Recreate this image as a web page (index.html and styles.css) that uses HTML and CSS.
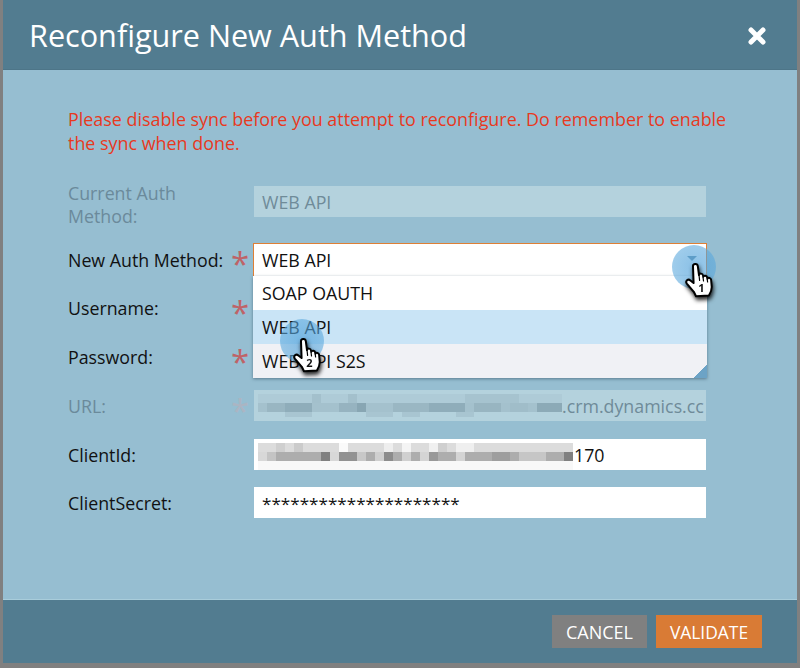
FILE: index.html
```html
<!DOCTYPE html>
<html lang="en">
<head>
<meta charset="utf-8">
<title>Reconfigure New Auth Method</title>
<link rel="stylesheet" href="styles.css">
</head>
<body>
<svg class="defs" width="0" height="0" aria-hidden="true">
  <symbol id="hand" viewBox="0 0 28 35">
    <path d="M8 3.5c-.2-3 4.4-3.4 4.8-.4L14 12c.5-2 3.6-1.8 4 .4l.3 1.4c.6-1.8 3.5-1.4 3.9.7l.2 1.2c.8-1.4 3.4-1 3.7 1l.6 6.6c.3 4-1 6.4-2.8 9.2L11 33.2l-2.2-4.4-7-8.2c-1.8-2.4 1.2-5.2 3.6-3.2L8.6 20z" fill="#fff" stroke="#000" stroke-width="2" stroke-linejoin="round"/>
    <path d="M14 12l.6 5.4M18 14l.5 4M22.2 16l.4 3" fill="none" stroke="#000" stroke-width="1.2" stroke-linecap="round"/>
  </symbol>
</svg>
<div class="dialog">
  <header class="head">
    <h1 class="title">Reconfigure New Auth Method</h1>
    <svg class="close" width="20" height="20" viewBox="0 0 20 20" aria-label="Close"><path d="M4 4l12 12M16 4L4 16" stroke="#fff" stroke-width="5" stroke-linecap="round"/></svg>
  </header>
  <main class="body">
    <p class="warn">Please disable sync before you attempt to reconfigure. Do remember to enable the sync when done.</p>
    <div class="form">
      <div class="label label-first muted">Current Auth Method:</div>
      <div class="star"></div>
      <div class="field off">WEB API</div>

      <div class="label label-select">New Auth Method:</div>
      <div class="star">*</div>
      <div class="select">WEB API<span class="arrow"></span></div>

      <div class="label">Username:</div>
      <div class="star">*</div>
      <div class="field"></div>

      <div class="label">Password:</div>
      <div class="star">*</div>
      <div class="field"></div>

      <div class="label muted">URL:</div>
      <div class="star star-off">*</div>
      <div class="field off mosaic-field">
        <svg class="mosaic" width="304" height="24" viewBox="0 0 304 24" aria-hidden="true">
          <g>
            <rect x="0" y="0" width="304" height="9" fill="#aecbd7"/>
            <rect x="0" y="9" width="304" height="9" fill="#a4c1cd"/>
            <rect x="27" y="9" width="27" height="9" fill="#8fadba"/>
            <rect x="9" y="9" width="18" height="9" fill="#99b6c2"/>
            <rect x="81" y="9" width="27" height="9" fill="#96b3c0"/>
            <rect x="99" y="9" width="9" height="9" fill="#88a6b3"/>
            <rect x="135" y="9" width="36" height="9" fill="#9ab7c3"/>
            <rect x="171" y="9" width="36" height="9" fill="#8fadba"/>
            <rect x="216" y="9" width="27" height="9" fill="#98b5c1"/>
            <rect x="252" y="9" width="18" height="9" fill="#a0bdc9"/>
            <rect x="279" y="9" width="25" height="9" fill="#8caab7"/>
            <rect x="54" y="0" width="9" height="9" fill="#a3c0cc"/>
            <rect x="90" y="0" width="9" height="9" fill="#a3c0cc"/>
            <rect x="207" y="0" width="54" height="9" fill="#a6c3cf"/>
            <rect x="27" y="18" width="27" height="5" fill="#a8c5d1"/>
            <rect x="108" y="18" width="27" height="5" fill="#a8c5d1"/>
            <rect x="144" y="18" width="18" height="5" fill="#a8c5d1"/>
            <rect x="198" y="18" width="18" height="5" fill="#a8c5d1"/>
          </g>
        </svg><span>.crm.dynamics.cc</span>
      </div>

      <div class="label">ClientId:</div>
      <div class="star"></div>
      <div class="field mosaic-field">
        <svg class="mosaic" width="315" height="27" viewBox="0 0 315 27" aria-hidden="true">
          <rect x="0" y="18" width="315" height="9" fill="#f8f8f8"/>
          <rect x="0" y="0" width="315" height="9" fill="#dcdcdc"/>
          <rect x="18" y="0" width="9" height="9" fill="#cfcfcf"/>
          <rect x="36" y="0" width="9" height="9" fill="#cbcbcb"/>
          <rect x="81" y="0" width="9" height="9" fill="#fafafa"/>
          <rect x="126" y="0" width="9" height="9" fill="#eeeeee"/>
          <rect x="144" y="0" width="9" height="9" fill="#f4f4f4"/>
          <rect x="171" y="0" width="9" height="9" fill="#f0f0f0"/>
          <rect x="180" y="0" width="9" height="9" fill="#cfcfcf"/>
          <rect x="198" y="0" width="18" height="9" fill="#efefef"/>
          <rect x="0" y="9" width="315" height="9" fill="#adadad"/>
          <rect x="0" y="9" width="9" height="9" fill="#d8d8d8"/>
          <rect x="9" y="9" width="9" height="9" fill="#c4c4c4"/>
          <rect x="63" y="9" width="9" height="9" fill="#808080"/>
          <rect x="72" y="9" width="9" height="9" fill="#d8d8d8"/>
          <rect x="81" y="9" width="18" height="9" fill="#929292"/>
          <rect x="99" y="9" width="9" height="9" fill="#c8c8c8"/>
          <rect x="117" y="9" width="9" height="9" fill="#cfcfcf"/>
          <rect x="126" y="9" width="9" height="9" fill="#8c8c8c"/>
          <rect x="144" y="9" width="9" height="9" fill="#d0d0d0"/>
          <rect x="162" y="9" width="9" height="9" fill="#d4d4d4"/>
          <rect x="171" y="9" width="9" height="9" fill="#989898"/>
          <rect x="198" y="9" width="9" height="9" fill="#d4d4d4"/>
          <rect x="234" y="9" width="18" height="9" fill="#9e9e9e"/>
          <rect x="261" y="9" width="27" height="9" fill="#c6c6c6"/>
          <rect x="306" y="9" width="9" height="9" fill="#808080"/>
        </svg><span class="tight">170</span>
      </div>

      <div class="label">ClientSecret:</div>
      <div class="star"></div>
      <div class="field field-secret">*********************</div>
    </div>
    <ul class="menu">
      <li class="opt">SOAP OAUTH</li>
      <li class="opt opt-hover">WEB API</li>
      <li class="opt opt-last">WEB API S2S</li>
    </ul>
    <span class="grip"></span>
    <span class="spot spot-one"></span>
    <span class="spot spot-two"></span>
    <svg class="hand hand-one" width="28" height="35" viewBox="0 0 28 35" aria-hidden="true"><use href="#hand"/><text class="hand-num" x="16.5" y="28.5">1</text></svg>
    <svg class="hand hand-two" width="28" height="35" viewBox="0 0 28 35" aria-hidden="true"><use href="#hand"/><text class="hand-num" x="16.5" y="28.5">2</text></svg>
  </main>
  <footer class="foot">
    <button class="btn btn-cancel">CANCEL</button>
    <button class="btn btn-validate">VALIDATE</button>
  </footer>
</div>
</body>
</html>
```

FILE: styles.css
```css
* { box-sizing: border-box; }
html, body { margin: 0; padding: 0; height: 100%; overflow: hidden; }
body {
  background: #808080;
  font-family: "Open Sans", "Noto Sans", sans-serif;
  font-size: 17.8px;
  color: #111;
}
.defs { position: absolute; }
.dialog {
  margin: 0 3px;
  height: 663px;
  display: flex;
  flex-direction: column;
  background: #96bed1;
}
.head {
  height: 70px;
  flex: none;
  background: #527c90;
  border-bottom: 1px solid #4d7588;
  display: flex;
  align-items: center;
  justify-content: space-between;
  padding: 0 30px 0 26px;
}
.title {
  margin: 0;
  font-size: 30.6px;
  font-weight: 400;
  color: #fff;
  line-height: 42px;
}
.close { flex: none; margin-top: 2px; }
.body {
  position: relative;
  flex: 1;
  padding: 37px 60px 0 65px;
  border-bottom: 1px solid #a9cddb;
}
.warn {
  margin: 0 0 31px;
  color: #e8391e;
  font-size: 17.9px;
  line-height: 24px;
}
.form {
  display: grid;
  grid-template-columns: 163px 22px 454px;
  grid-template-rows: 57px 49px 49px 49px 49px 48px 31px;
  align-items: start;
}
.label { line-height: 24px; padding-top: 4px; white-space: nowrap; }
.label-select { padding-top: 5px; }
.label-first { margin-top: -4px; padding-top: 0; width: 130px; line-height: 23px; white-space: normal; }
.muted { color: #6b8a9b; }
.star {
  color: #bf6367;
  font-size: 33px;
  line-height: 34px;
  margin-top: 4px;
  height: 24px;
}
.star-off { color: #abb5c3; }
.field {
  height: 31px;
  margin: 0 1px;
  background: #fff;
  padding: 0 0 0 8px;
  line-height: 33px;
  white-space: nowrap;
  overflow: hidden;
}
.field-secret { font-size: 17.1px; }
.off { background: #b4d2dd; color: #6f8b99; }
.mosaic-field { display: flex; align-items: flex-start; padding-left: 4px; }
.mosaic { flex: none; margin-top: 4px; filter: blur(.7px); }
.tight { margin-left: 1px; }
.select {
  position: relative;
  height: 34px;
  border: 1px solid #de7f35;
  background: #fff;
  padding-left: 8px;
  line-height: 32px;
}
.arrow {
  position: absolute;
  right: 9px;
  top: 12px;
  width: 0;
  height: 0;
  border-left: 5px solid transparent;
  border-right: 5px solid transparent;
  border-top: 5px solid #6f93a8;
}
.menu {
  position: absolute;
  left: 250px;
  top: 206px;
  width: 454px;
  margin: 0;
  padding: 0;
  list-style: none;
  box-shadow: 0 1px 3px rgba(40, 70, 90, .55);
}
.opt { height: 34px; background: #fff; padding-left: 9px; line-height: 34px; }
.opt-hover { background: #c9e4f6; }
.opt-last { background: #f0f1f5; }
.grip {
  position: absolute;
  left: 690px;
  top: 295px;
  width: 14px;
  height: 13px;
  background: linear-gradient(135deg, transparent 50%, #6ca3c6 50%);
}
.spot {
  position: absolute;
  width: 44px;
  height: 44px;
  border-radius: 50%;
  background: radial-gradient(circle at 50% 50%, rgba(78, 160, 218, .66), rgba(96, 172, 222, .55));
}
.spot-one { left: 669px; top: 175px; }
.spot-two { left: 277px; top: 249px; }
.hand {
  position: absolute;
  overflow: visible;
  filter: drop-shadow(1px 3px 2px rgba(0, 0, 0, .85));
}
.hand-one { left: 682px; top: 193px; }
.hand-two { left: 290px; top: 268px; }
.hand-num { font-size: 11px; font-weight: 700; fill: #111; text-anchor: middle; }
.foot {
  height: 63px;
  flex: none;
  background: #527c90;
  display: flex;
  justify-content: flex-end;
  align-items: flex-start;
  gap: 9px;
  padding: 15px 35px 0 0;
}
.btn {
  height: 33px;
  border: 0;
  padding: 0;
  color: #fff;
  font-family: inherit;
  font-size: 17.4px;
}
.btn-cancel { width: 95px; background: #808080; font-size: 18px; }
.btn-validate { width: 106px; background: #d97b35; }
```
